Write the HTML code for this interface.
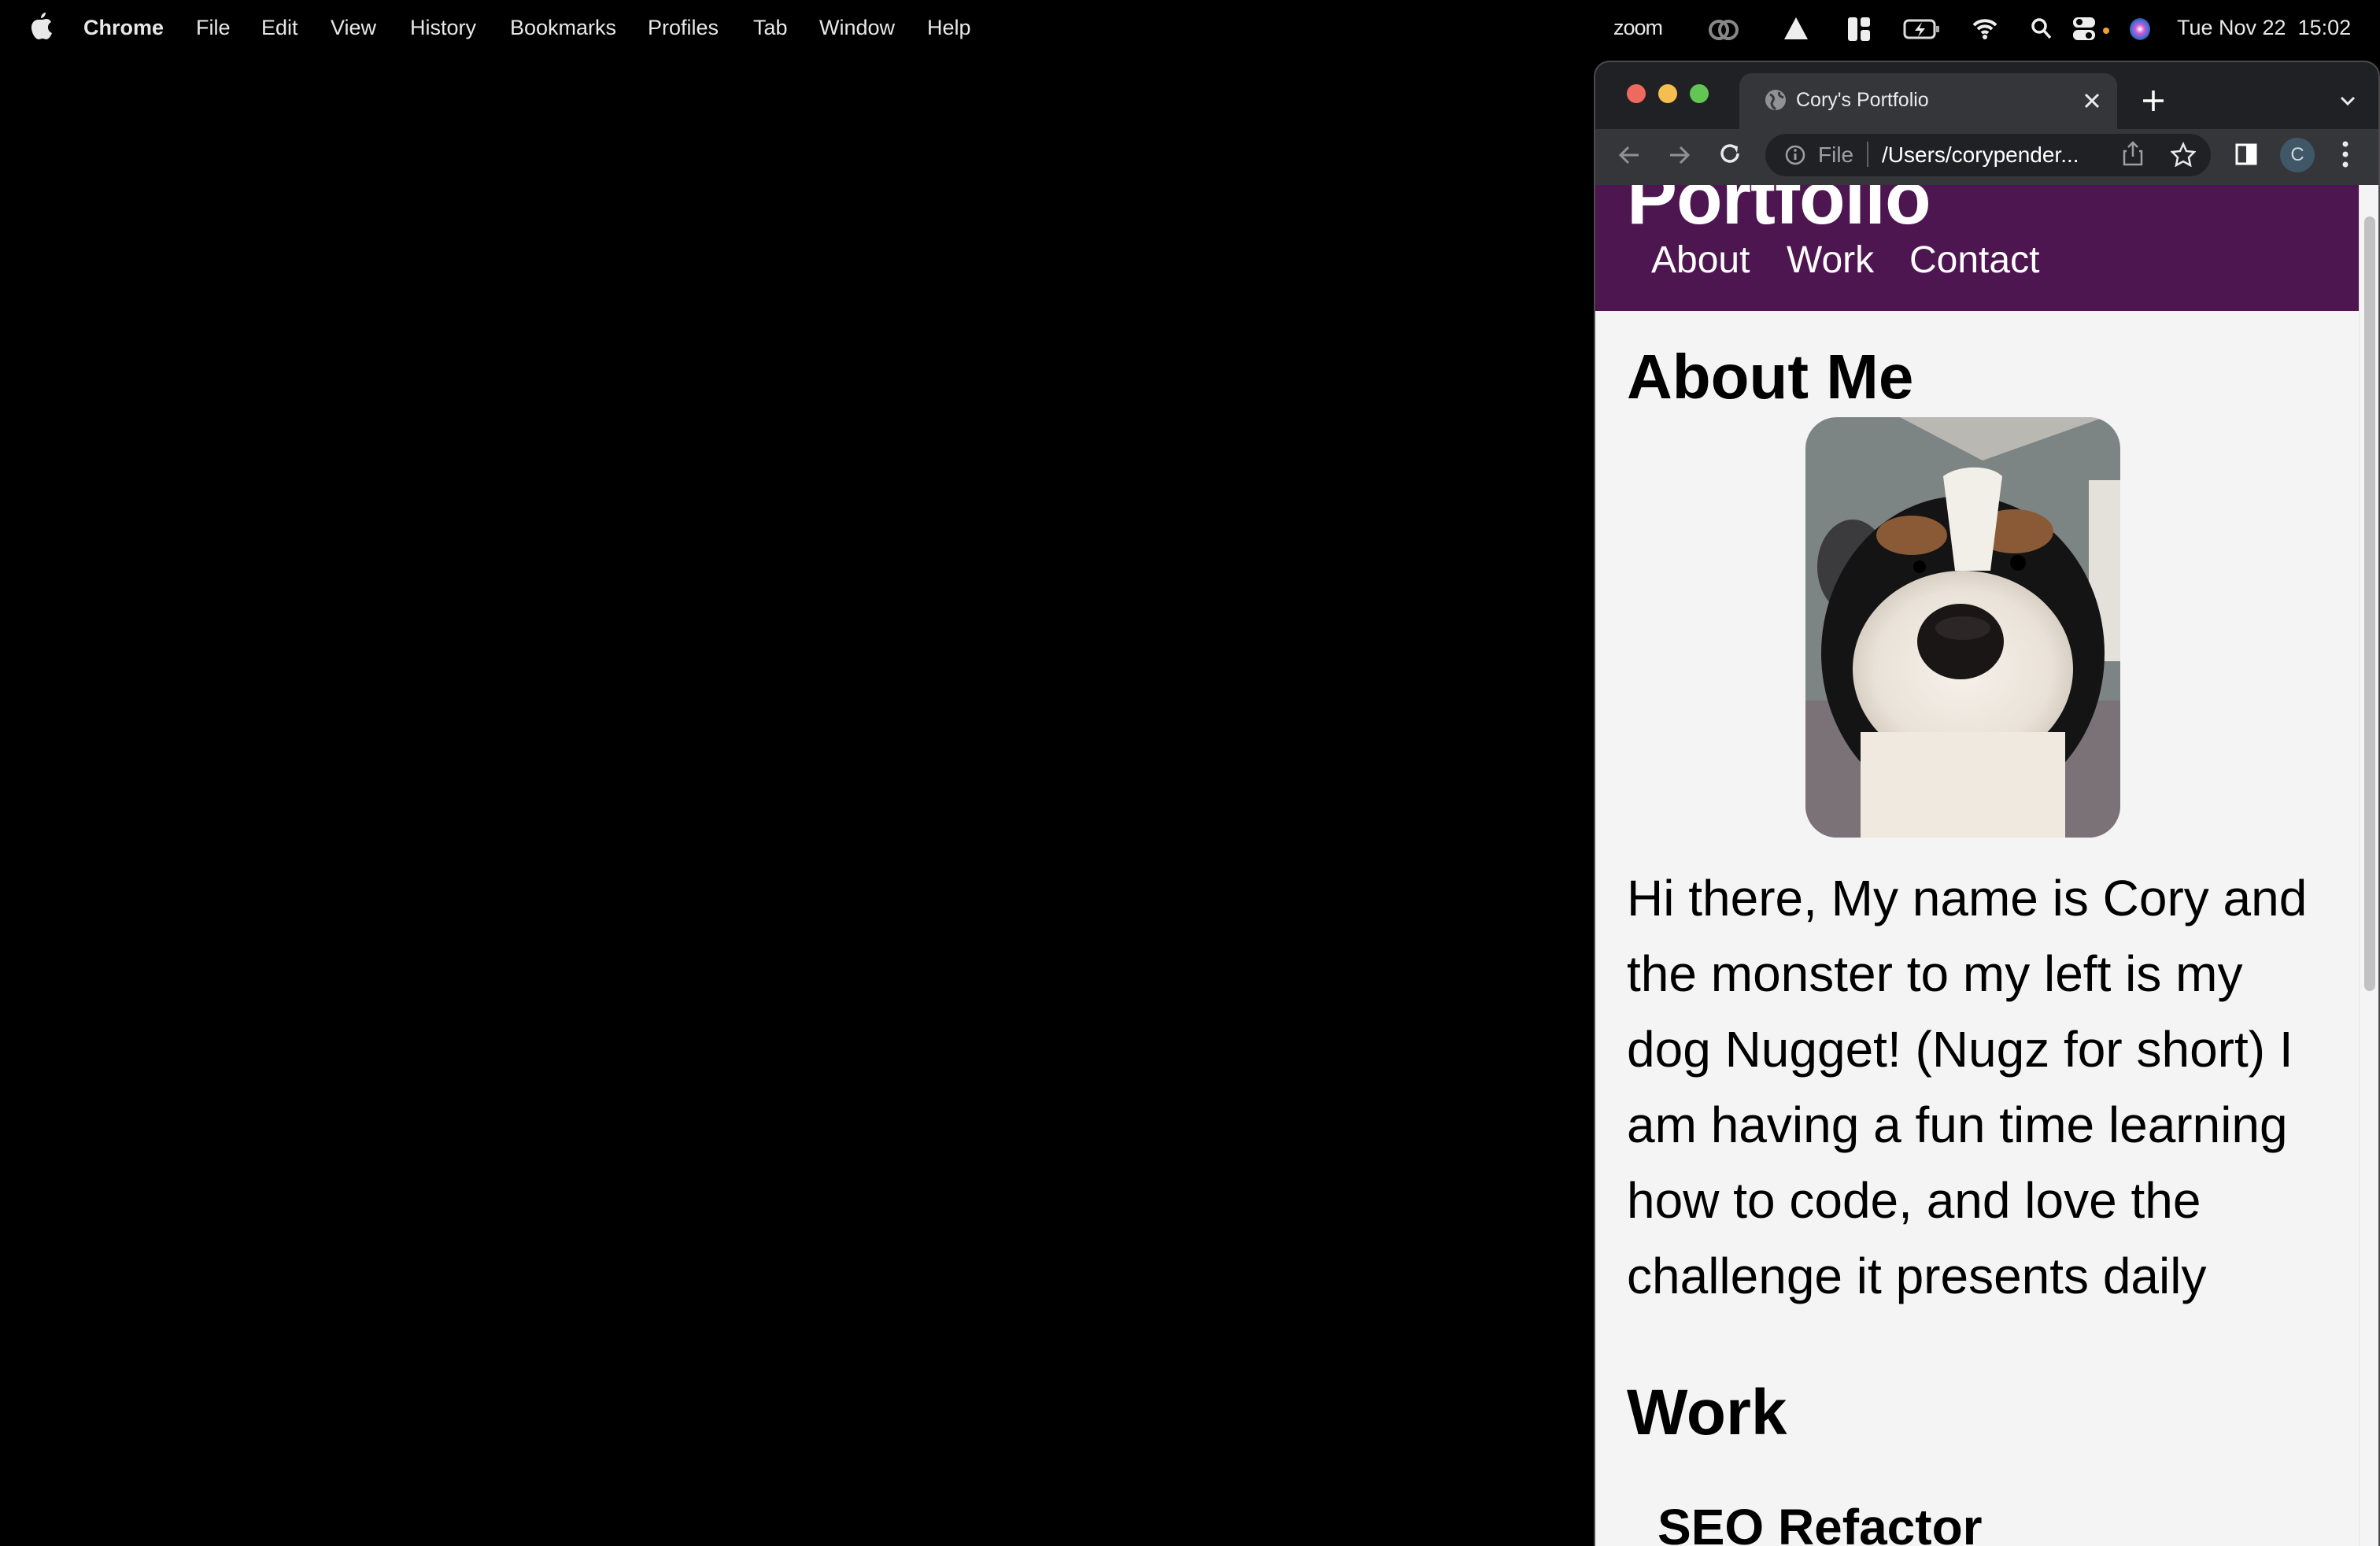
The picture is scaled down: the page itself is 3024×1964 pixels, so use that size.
<!DOCTYPE html>
<html><head><meta charset="utf-8"><style>
*{margin:0;padding:0;box-sizing:border-box}
body{width:3024px;height:1964px;background:#000;position:relative;overflow:hidden;font-family:"Liberation Sans",Arial,sans-serif}
.a{position:absolute;white-space:nowrap}
.mb{color:#e8e8e8;font-size:27px;top:20px}
.win{position:absolute;left:2025px;top:77px;width:999px;height:1887px;border-radius:20px 20px 0 0;overflow:hidden;background:#202124;border:2px solid #4a4a4d;border-bottom:none}
.pg{font-family:"Liberation Sans",Arial,sans-serif;color:#000}
</style></head><body>
<svg class="a" style="left:40px;top:16px" width="26" height="34" viewBox="0 0 26 34"><path d="M18 0c0 4-3 7-6 7 0-4 3-7 6-7zM13 9c2 0 4-1 6-1 3 0 5 2 6 4-3 2-4 4-4 7 0 4 3 6 5 7-1 3-4 8-7 8-2 0-3-1-5-1s-3 1-5 1C5 34 0 26 0 19 0 12 5 9 8 9c2 0 3 0 5 0z" fill="#e8e8e8"/></svg>
<div class="a mb" style="left:106px;font-weight:bold">Chrome</div>
<div class="a mb" style="left:249px">File</div>
<div class="a mb" style="left:332px">Edit</div>
<div class="a mb" style="left:420px">View</div>
<div class="a mb" style="left:521px">History</div>
<div class="a mb" style="left:648px">Bookmarks</div>
<div class="a mb" style="left:823px">Profiles</div>
<div class="a mb" style="left:957px">Tab</div>
<div class="a mb" style="left:1041px">Window</div>
<div class="a mb" style="left:1178px">Help</div>
<div class="a mb" style="left:2050px;letter-spacing:-1px">zoom</div>
<svg class="a" style="left:2170px;top:22px" width="40" height="32"><circle cx="14" cy="16" r="11" fill="none" stroke="#888" stroke-width="4"/><circle cx="26" cy="16" r="11" fill="none" stroke="#888" stroke-width="4"/></svg>
<svg class="a" style="left:2265px;top:20px" width="34" height="32"><path d="M17 2L32 30H2z" fill="#eee"/></svg>
<svg class="a" style="left:2348px;top:22px" width="30" height="30"><rect x="0" y="0" width="12" height="30" rx="3" fill="#eee"/><rect x="16" y="0" width="12" height="12" rx="3" fill="#eee"/><rect x="16" y="16" width="12" height="14" rx="3" fill="#eee"/></svg>
<svg class="a" style="left:2418px;top:24px" width="48" height="26"><rect x="2" y="2" width="38" height="22" rx="5" fill="none" stroke="#ddd" stroke-width="3"/><rect x="42" y="9" width="4" height="8" fill="#aaa"/><path d="M24 4l-9 11h7l-3 8 9-11h-7z" fill="#eee"/></svg>
<svg class="a" style="left:2505px;top:22px" width="34" height="28"><path d="M3 10a20 20 0 0 1 28 0M8 15a13 13 0 0 1 18 0M13 20a6 6 0 0 1 8 0" stroke="#eee" stroke-width="4" fill="none"/><circle cx="17" cy="25" r="3" fill="#eee"/></svg>
<svg class="a" style="left:2580px;top:22px" width="28" height="30"><circle cx="11" cy="11" r="8" stroke="#eee" stroke-width="3.5" fill="none"/><path d="M17 17l8 9" stroke="#eee" stroke-width="3.5"/></svg>
<svg class="a" style="left:2634px;top:22px" width="50" height="30"><rect x="0" y="0" width="28" height="13" rx="6" fill="#eee"/><rect x="0" y="16" width="28" height="13" rx="6" fill="#eee"/><circle cx="8" cy="6" r="4" fill="#000"/><circle cx="20" cy="23" r="4" fill="#000"/><circle cx="42" cy="17" r="4" fill="#f0a030"/></svg>
<div class="a" style="left:2706px;top:23px;width:26px;height:28px;border-radius:50%;background:radial-gradient(circle at 50% 50%,#fff 0,#d05ad0 30%,#3a6fd8 60%,#222 100%)"></div>
<div class="a mb" style="left:2766px">Tue Nov 22&nbsp; 15:02</div>

<div class="win">
  <div class="a" style="left:40px;top:28px;width:24px;height:24px;border-radius:50%;background:#ee6a5f"></div>
  <div class="a" style="left:80px;top:28px;width:24px;height:24px;border-radius:50%;background:#f5be4f"></div>
  <div class="a" style="left:120px;top:28px;width:24px;height:24px;border-radius:50%;background:#62c554"></div>
  <div class="a" style="left:183px;top:14px;width:480px;height:73px;background:#35363a;border-radius:16px 16px 0 0"></div>
  <svg class="a" style="left:214px;top:33px" width="30" height="30"><circle cx="15" cy="15" r="13" fill="#8e9196"/><path d="M8 8c4 2 6 5 3 9s2 8 4 10M20 5c-2 4 2 6 5 7" stroke="#35363a" stroke-width="3" fill="none"/></svg>
  <div class="a" style="left:255px;top:34px;font-size:25px;color:#e8eaed">Cory's Portfolio</div>
  <svg class="a" style="left:620px;top:38px" width="22" height="22"><path d="M3 3l16 16M19 3L3 19" stroke="#e8eaed" stroke-width="3"/></svg>
  <svg class="a" style="left:694px;top:34px" width="30" height="30"><path d="M15 2v26M2 15h26" stroke="#fff" stroke-width="3.5"/></svg>
  <svg class="a" style="left:945px;top:42px" width="22" height="16"><path d="M3 3l8 8 8-8" stroke="#e8eaed" stroke-width="3" fill="none"/></svg>
  <div class="a" style="left:0;top:85px;width:999px;height:73px;background:#35363a;border-bottom:2px solid #4a4a4d"></div>
  <svg class="a" style="left:28px;top:103px" width="30" height="30"><path d="M27 15H4M14 5L4 15l10 10" stroke="#8e9196" stroke-width="3" fill="none"/></svg>
  <svg class="a" style="left:92px;top:103px" width="30" height="30"><path d="M3 15h23M16 5l10 10-10 10" stroke="#8e9196" stroke-width="3" fill="none"/></svg>
  <svg class="a" style="left:157px;top:103px" width="30" height="30"><path d="M24 13a10 10 0 1 1-4-8" stroke="#e8eaed" stroke-width="3.5" fill="none"/><path d="M17 2l7 2-1 8z" fill="#e8eaed"/></svg>
  <div class="a" style="left:216px;top:91px;width:566px;height:54px;background:#202124;border-radius:27px"></div>
  <svg class="a" style="left:240px;top:104px" width="28" height="28"><circle cx="14" cy="14" r="11" stroke="#9aa0a6" stroke-width="2.5" fill="none"/><path d="M14 12v8" stroke="#9aa0a6" stroke-width="3"/><circle cx="14" cy="8" r="1.8" fill="#9aa0a6"/></svg>
  <div class="a" style="left:283px;top:102px;font-size:28px;color:#9aa0a6">File</div>
  <div class="a" style="left:345px;top:101px;width:2px;height:32px;background:#5f6368"></div>
  <div class="a" style="left:364px;top:102px;font-size:28px;color:#fff">/Users/corypender...</div>
  <svg class="a" style="left:670px;top:99px" width="26" height="34"><path d="M13 3v18M7 9l6-6 6 6M5 14H2v17h22V14h-3" stroke="#9aa0a6" stroke-width="2.5" fill="none"/></svg>
  <svg class="a" style="left:731px;top:101px" width="32" height="32"><path d="M16 3l4 9 10 1-7 7 2 10-9-5-9 5 2-10-7-7 10-1z" stroke="#e8eaed" stroke-width="2.5" fill="none"/></svg>
  <svg class="a" style="left:813px;top:103px" width="28" height="28"><rect x="2" y="2" width="24" height="24" fill="none" stroke="#fff" stroke-width="3"/><rect x="14" y="2" width="12" height="24" fill="#fff"/></svg>
  <div class="a" style="left:870px;top:96px;width:44px;height:44px;border-radius:50%;background:#3f5767;color:#cfd8dc;font-size:24px;text-align:center;line-height:44px">C</div>
  <svg class="a" style="left:948px;top:99px" width="10" height="36"><circle cx="5" cy="5" r="3.5" fill="#e8eaed"/><circle cx="5" cy="18" r="3.5" fill="#e8eaed"/><circle cx="5" cy="31" r="3.5" fill="#e8eaed"/></svg>

  <div class="a pg" style="left:0;top:156px;width:999px;height:1750px;background:#f4f4f4;overflow:hidden">
    <div class="a" style="left:0;top:0;width:970px;height:160px;background:#4e1650"></div>
    <div class="a" style="left:40px;top:-38px;font-size:96px;font-weight:bold;color:#fff;letter-spacing:-1px">Portfolio</div>
    <div class="a" style="left:71px;top:68px;font-size:48px;color:#fff">About</div>
    <div class="a" style="left:243px;top:68px;font-size:48px;color:#fff">Work</div>
    <div class="a" style="left:399px;top:68px;font-size:48px;color:#fff">Contact</div>
    <div class="a" style="left:40px;top:198px;font-size:80px;font-weight:bold">About Me</div>
    <svg class="a" style="left:267px;top:295px" width="400" height="534" viewBox="0 0 400 534">
      <defs><clipPath id="c"><rect width="400" height="534" rx="40"/></clipPath>
      <radialGradient id="w" cx="50%" cy="50%" r="50%"><stop offset="0" stop-color="#f6f1ea"/><stop offset="0.8" stop-color="#e9e2d8"/><stop offset="1" stop-color="#d8cfc4"/></radialGradient></defs>
      <g clip-path="url(#c)">
        <rect width="400" height="534" fill="#7d8484"/>
        <path d="M120 0h260L225 55z" fill="#b9b8b3"/>
        <rect x="360" y="80" width="40" height="230" fill="#e4e1da"/>
        <rect x="0" y="360" width="400" height="174" fill="#7a7276"/>
        <ellipse cx="60" cy="190" rx="45" ry="60" fill="#3b3b3d"/>
        <ellipse cx="200" cy="300" rx="180" ry="200" fill="#141414"/>
        <ellipse cx="135" cy="150" rx="45" ry="25" fill="#8a5a36"/>
        <ellipse cx="265" cy="145" rx="50" ry="28" fill="#8a5a36"/>
        <path d="M175 75c20-15 60-15 75 0l-15 120h-45z" fill="#f2eee8"/>
        <ellipse cx="200" cy="320" rx="140" ry="125" fill="url(#w)"/>
        <rect x="70" y="400" width="260" height="140" fill="#efe9e0"/>
        <circle cx="145" cy="190" r="8" fill="#000"/><circle cx="270" cy="185" r="10" fill="#000"/>
        <ellipse cx="197" cy="285" rx="55" ry="48" fill="#1a1616"/>
        <ellipse cx="200" cy="268" rx="35" ry="15" fill="#2c2626"/>
      </g>
    </svg>
    <div class="a" style="left:40px;top:858px;font-size:64px;line-height:96px;white-space:normal;width:920px">Hi there, My name is Cory and<br>the monster to my left is my<br>dog Nugget! (Nugz for short) I<br>am having a fun time learning<br>how to code, and love the<br>challenge it presents daily</div>
    <div class="a" style="left:40px;top:1513px;font-size:82px;font-weight:bold">Work</div>
    <div class="a" style="left:79px;top:1668px;font-size:64px;font-weight:bold">SEO Refactor</div>
    <div class="a" style="left:970px;top:0;width:29px;height:1750px;background:#f4f4f4;border-left:1px solid #e4e4e4"></div>
    <div class="a" style="left:977px;top:40px;width:14px;height:984px;border-radius:7px;background:#c1c1c1"></div>
  </div>
</div>
</body></html>
